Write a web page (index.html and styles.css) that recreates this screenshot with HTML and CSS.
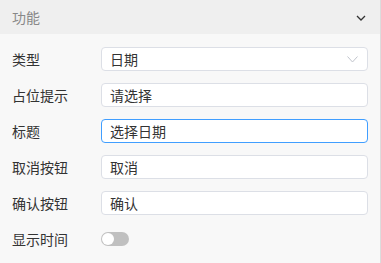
FILE: index.html
```html
<!DOCTYPE html>
<html lang="zh-CN">
<head>
<meta charset="utf-8">
<link rel="stylesheet" href="styles.css">
</head>
<body>
<div class="panel">
  <div class="panel-header">
    <span class="panel-title">功能</span>
    <svg class="chev" width="10" height="6" viewBox="0 0 10 6"><path d="M1 1 L5 5 L9 1" fill="none" stroke="#333" stroke-width="1.3"/></svg>
  </div>
  <div class="form">
    <div class="row">
      <label class="label">类型</label>
      <div class="input select">
        <span>日期</span>
        <svg class="sel-arrow" width="11" height="7" viewBox="0 0 11 7"><path d="M0.5 0.5 L5.5 6 L10.5 0.5" fill="none" stroke="#c0c4cc" stroke-width="1"/></svg>
      </div>
    </div>
    <div class="row">
      <label class="label">占位提示</label>
      <div class="input"><span>请选择</span></div>
    </div>
    <div class="row">
      <label class="label">标题</label>
      <div class="input focus"><span>选择日期</span></div>
    </div>
    <div class="row">
      <label class="label">取消按钮</label>
      <div class="input"><span>取消</span></div>
    </div>
    <div class="row">
      <label class="label">确认按钮</label>
      <div class="input"><span>确认</span></div>
    </div>
    <div class="row">
      <label class="label">显示时间</label>
      <div class="switch"><span class="knob"></span></div>
    </div>
  </div>
</div>
</body>
</html>
```
FILE: styles.css
```css
html, body {
  margin: 0;
  padding: 0;
  background: #f8f8f8;
}
body {
  font-family: "Noto Sans CJK SC", "Noto Sans", sans-serif;
  font-size: 14px;
  color: #333;
}
.panel {
  width: 380px;
  height: 263px;
  border-right: 1px solid #dcdcdc;
  background: #f8f8f8;
}
.panel-header {
  height: 34px;
  background: #efefef;
  display: flex;
  align-items: center;
  justify-content: space-between;
  padding: 0 14px 0 12px;
}
.panel-title {
  color: #888;
  font-size: 14px;
}
.chev {
  display: block;
  margin-top: 1px;
}
.form {
  padding: 13px 12px 0 12px;
  display: flex;
  flex-direction: column;
  gap: 12px;
}
.row {
  display: flex;
  align-items: center;
  height: 24px;
}
.label {
  width: 89px;
  flex: none;
  color: #333;
  line-height: 24px;
}
.input {
  flex: 1;
  height: 24px;
  box-sizing: border-box;
  border: 1px solid #dcdfe6;
  border-radius: 4px;
  background: #fff;
  padding: 0 8px;
  display: flex;
  align-items: center;
  justify-content: space-between;
  color: #333;
  line-height: 22px;
}
.input.focus {
  border-color: #409eff;
}
.sel-arrow {
  display: block;
  margin-right: 1px;
}
.switch {
  width: 28px;
  height: 14px;
  border-radius: 7px;
  background: #c0c0c0;
  position: relative;
}
.knob {
  position: absolute;
  left: 1px;
  top: 1px;
  width: 12px;
  height: 12px;
  border-radius: 50%;
  background: #fff;
}
```
